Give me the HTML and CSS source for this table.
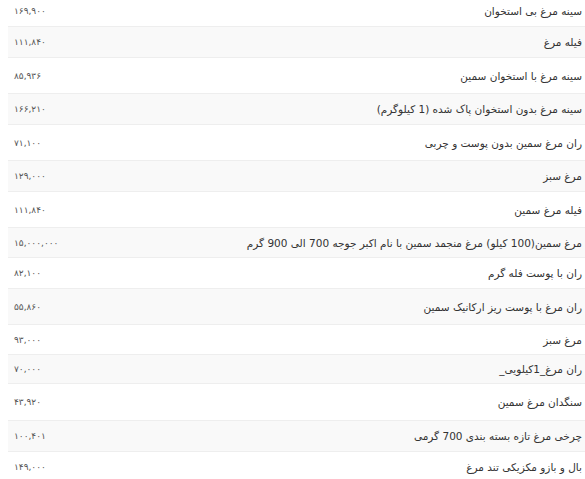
FILE: index.html
```html
<!DOCTYPE html>
<html lang="fa">
<head>
<meta charset="utf-8">
<link rel="stylesheet" href="styles.css">
</head>
<body>
<div class="wrap">
<table class="prices" dir="rtl">
<tbody>
<tr class="h31"><td class="name">سینه مرغ بی استخوان</td><td class="price">۱۶۹,۹۰۰</td></tr>
<tr class="h31"><td class="name">فیله مرغ</td><td class="price">۱۱۱,۸۴۰</td></tr>
<tr class="h36"><td class="name">سینه مرغ با استخوان سمین</td><td class="price">۸۵,۹۳۶</td></tr>
<tr class="h31"><td class="name">سینه مرغ بدون استخوان پاک شده (1 کیلوگرم)</td><td class="price">۱۶۶,۲۱۰</td></tr>
<tr class="h36"><td class="name">ران مرغ سمین بدون پوست و چربی</td><td class="price">۷۱,۱۰۰</td></tr>
<tr class="h31"><td class="name">مرغ سبز</td><td class="price">۱۲۹,۰۰۰</td></tr>
<tr class="h36"><td class="name">فیله مرغ سمین</td><td class="price">۱۱۱,۸۴۰</td></tr>
<tr class="h30"><td class="name">مرغ سمین(100 کیلو) مرغ منجمد سمین با نام اکبر جوجه 700 الی 900 گرم</td><td class="price">۱۵,۰۰۰,۰۰۰</td></tr>
<tr class="h31"><td class="name">ران با پوست فله گرم</td><td class="price">۸۲,۱۰۰</td></tr>
<tr class="h36"><td class="name">ران مرغ با پوست ریز ارکانیک سمین</td><td class="price">۵۵,۸۶۰</td></tr>
<tr class="h30"><td class="name">مرغ سبز</td><td class="price">۹۳,۰۰۰</td></tr>
<tr class="h29"><td class="name">ران مرغ_1کیلویی_</td><td class="price">۷۰,۰۰۰</td></tr>
<tr class="h37"><td class="name">سنگدان مرغ سمین</td><td class="price">۴۳,۹۲۰</td></tr>
<tr class="h31"><td class="name">چرخی مرغ تازه بسته بندی 700 گرمی</td><td class="price">۱۰۰,۴۰۱</td></tr>
<tr class="h31"><td class="name">بال و بازو مکزیکی تند مرغ</td><td class="price">۱۴۹,۰۰۰</td></tr>
</tbody>
</table>
</div>
</body>
</html>
```
FILE: styles.css
```css
html, body {
  margin: 0;
  padding: 0;
  background: #ffffff;
  overflow: hidden;
}
body {
  font-family: "DejaVu Sans", "Noto Sans", sans-serif;
}
.wrap {
  margin: -5px 0 0 8px;
  width: 582px;
}
.prices {
  width: 100%;
  border-collapse: collapse;
}
.prices tr {
  border-top: 1px solid #eeeeee;
}
.prices tr:nth-child(even) {
  background: #f9f9f9;
}
.prices td {
  padding: 0 8px 0 6px;
  vertical-align: middle;
}
.name {
  text-align: right;
  color: #333333;
  font-size: 10.5px;
}
.price {
  text-align: left;
  color: #555555;
  font-size: 9px;
  letter-spacing: -0.6px;
  width: 120px;
  padding-left: 6px;
}
.h29 { height: 29px; }
.h30 { height: 30px; }
.h31 { height: 31px; }
.h36 { height: 36px; }
.h37 { height: 37px; }
```
